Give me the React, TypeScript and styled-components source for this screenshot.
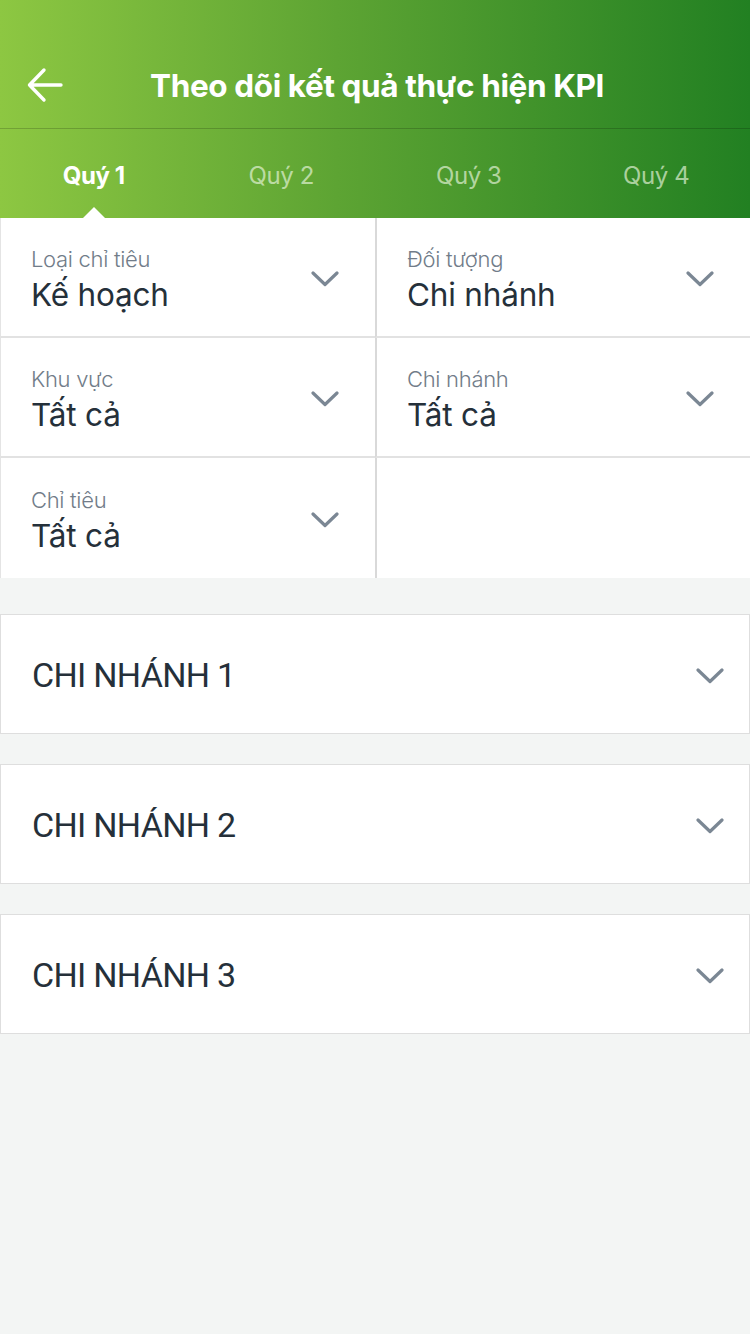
import React from "react";
import styled, { createGlobalStyle } from "styled-components";

const Global = createGlobalStyle`
  html, body { margin: 0; padding: 0; background: #f3f5f4; }
  body { font-family: Inter, "Noto Sans", sans-serif; -webkit-font-smoothing: antialiased; }
  * { box-sizing: border-box; }
`;

const Page = styled.div`
  width: 750px;
  min-height: 1334px;
  background: #f3f5f4;
  display: flex;
  flex-direction: column;
`;

const Header = styled.header`
  background: linear-gradient(90deg, #8dc742 0%, #5da433 45%, #228022 100%);
  display: flex;
  flex-direction: column;
`;

const TitleBar = styled.div`
  height: 129px;
  display: flex;
  align-items: center;
  border-bottom: 1px solid rgba(0, 0, 0, 0.18);
  padding: 42px 0 0 26px;
`;

const BackButton = styled.button`
  background: none;
  border: 0;
  padding: 0;
  width: 38px;
  height: 38px;
  display: flex;
  align-items: center;
  justify-content: center;
`;

const Title = styled.h1`
  margin: 0;
  flex: 1;
  text-align: center;
  color: #fff;
  font-size: 31.5px;
  font-weight: 700;
  letter-spacing: -0.4px;
  padding-right: 60px;
`;

const Tabs = styled.nav`
  height: 89px;
  display: grid;
  grid-template-columns: repeat(4, 1fr);
`;

const Tab = styled.div<{ $active?: boolean }>`
  position: relative;
  display: flex;
  align-items: center;
  justify-content: center;
  padding-top: 3px;
  font-size: 24px;
  letter-spacing: -0.4px;
  font-weight: ${(p) => (p.$active ? 700 : 400)};
  color: ${(p) => (p.$active ? "#ffffff" : "rgba(232,245,220,0.68)")};
  ${(p) =>
    p.$active &&
    `&::after {
      content: "";
      position: absolute;
      left: 50%;
      bottom: 0;
      transform: translateX(-50%);
      border-left: 11px solid transparent;
      border-right: 11px solid transparent;
      border-bottom: 11px solid #fff;
    }`}
`;

const FilterGrid = styled.section`
  display: grid;
  grid-template-columns: 375px 375px;
  grid-auto-rows: 120px;
  background: #fff;
`;

const FilterCell = styled.div<{ $right?: boolean; $last?: boolean }>`
  display: flex;
  align-items: center;
  padding: 0 36px 0 30px;
  border-left: ${(p) => (p.$right ? "2px solid #d9d9d9" : "1px solid #e4e4e4")};
  border-bottom: ${(p) => (p.$last ? "none" : "2px solid #e2e2e2")};
`;

const FilterText = styled.div`
  flex: 1;
  display: flex;
  flex-direction: column;
  margin-top: 5px;
`;

const Label = styled.span`
  font-size: 22px;
  font-weight: 300;
  color: #717c89;
  letter-spacing: -0.3px;
  line-height: 30px;
`;

const Value = styled.span`
  font-size: 31.5px;
  color: #25303a;
  letter-spacing: -0.2px;
  line-height: 42px;
`;

const EmptyCell = styled.div`
  border-left: 2px solid #d9d9d9;
`;

const List = styled.section`
  display: flex;
  flex-direction: column;
  gap: 30px;
  padding-top: 36px;
`;

const Card = styled.div`
  height: 120px;
  background: #fff;
  border: 1px solid #dedede;
  display: flex;
  align-items: center;
  padding: 0 25px 0 31px;
`;

const CardTitle = styled.span`
  flex: 1;
  font-family: Roboto, "Noto Sans", sans-serif;
  font-size: 34px;
  color: #25303a;
  letter-spacing: -0.7px;
  margin-top: 2px;
`;

const ChevronSvg = styled.svg`
  margin-top: 4px;
  flex-shrink: 0;
`;

const Chevron = () => (
  <ChevronSvg width="28" height="16" viewBox="0 0 28 16" fill="none">
    <path d="M2 2 L14 13.5 L26 2" stroke="#7b8794" strokeWidth="3.2" strokeLinecap="round" strokeLinejoin="round" />
  </ChevronSvg>
);

const BackArrow = () => (
  <svg width="38" height="38" viewBox="0 0 38 38" fill="none">
    <path d="M35 19 H3.5 M18 4 L3.5 19 L18 34" stroke="#fff" strokeWidth="3.4" strokeLinecap="round" strokeLinejoin="round" />
  </svg>
);

const filters = [
  { label: "Loại chỉ tiêu", value: "Kế hoạch" },
  { label: "Đối tượng", value: "Chi nhánh" },
  { label: "Khu vực", value: "Tất cả" },
  { label: "Chi nhánh", value: "Tất cả" },
  { label: "Chỉ tiêu", value: "Tất cả" },
];

export default function App() {
  return (
    <Page>
      <Global />
      <Header>
        <TitleBar>
          <BackButton aria-label="back">
            <BackArrow />
          </BackButton>
          <Title>Theo dõi kết quả thực hiện KPI</Title>
        </TitleBar>
        <Tabs>
          {["Quý 1", "Quý 2", "Quý 3", "Quý 4"].map((t, i) => (
            <Tab key={t} $active={i === 0}>
              {t}
            </Tab>
          ))}
        </Tabs>
      </Header>
      <FilterGrid>
        {filters.map((f, i) => (
          <FilterCell key={f.label} $right={i % 2 === 1} $last={i === 4}>
            <FilterText>
              <Label>{f.label}</Label>
              <Value>{f.value}</Value>
            </FilterText>
            <Chevron />
          </FilterCell>
        ))}
        <EmptyCell />
      </FilterGrid>
      <List>
        {["CHI NHÁNH 1", "CHI NHÁNH 2", "CHI NHÁNH 3"].map((c) => (
          <Card key={c}>
            <CardTitle>{c}</CardTitle>
            <Chevron />
          </Card>
        ))}
      </List>
    </Page>
  );
}
